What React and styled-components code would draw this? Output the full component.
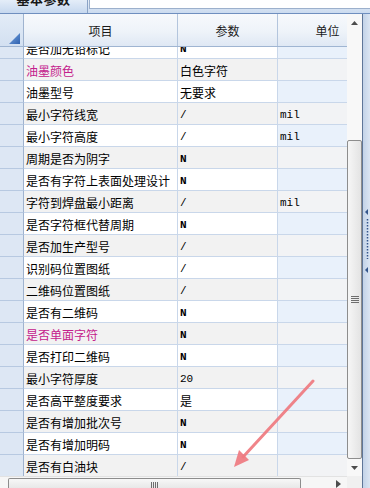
import React from "react";
import styled, { createGlobalStyle } from "styled-components";

const Global = createGlobalStyle`
  html, body { margin: 0; padding: 0; overflow: hidden; background: #ffffff; }
  body { width: 370px; height: 488px; font-family: "Noto Sans CJK SC", "Noto Sans", sans-serif; }
`;

const Frame = styled.div`
  position: relative;
  width: 370px;
  height: 488px;
  display: flex;
  flex-direction: column;
  overflow: hidden;
`;

const TabStrip = styled.div`
  height: 13px;
  flex: none;
  display: flex;
  align-items: flex-start;
  background: linear-gradient(#e6eef8, #cbdbef);
  border-bottom: 1px solid #6f8fbf;
`;

const Tab = styled.div`
  width: 87px;
  height: 13px;
  flex: none;
  overflow: hidden;
  border-right: 1px solid #8aa3c6;
  background: linear-gradient(#e4edf8, #c6d8ef);
  display: flex;
  justify-content: center;
`;

const TabLabel = styled.span`
  margin-top: -10px;
  font-size: 13px;
  line-height: 17px;
  font-weight: 700;
  color: #1a1a1a;
  letter-spacing: 0.5px;
`;

const TabFiller = styled.div`
  flex: 1;
  height: 8px;
  margin-left: 1px;
  background: #ffffff;
  border-left: 1px solid #9cb0cc;
  border-bottom: 1px solid #9cb0cc;
`;

const Main = styled.div`
  flex: 1;
  display: flex;
  min-height: 0;
`;

const GridArea = styled.div`
  width: 362px;
  flex: none;
  display: flex;
  flex-direction: column;
`;

const Body = styled.div`
  flex: 1;
  display: flex;
  min-height: 0;
`;

const Viewport = styled.div`
  width: 347px;
  flex: none;
  overflow: hidden;
  display: flex;
  flex-direction: column;
`;

const HeaderRow = styled.div`
  height: 33px;
  flex: none;
  display: flex;
  border-bottom: 1px solid #9fb5d2;
  box-sizing: border-box;
`;

const Corner = styled.div`
  position: relative;
  width: 24px;
  flex: none;
  box-sizing: border-box;
  border-right: 1px solid #9fb3cf;
  background: linear-gradient(#e3ecf7, #d3e0f1);
`;

const CornerMark = styled.svg`
  position: absolute;
  right: 2px;
  bottom: 1px;
`;

const HeadCell = styled.div`
  width: ${(p) => p.$w}px;
  flex: none;
  box-sizing: border-box;
  border-right: 1px solid #b3c5dd;
  background: linear-gradient(#f7f9fc 0%, #eef3f9 55%, #dfe8f4 100%);
  display: flex;
  align-items: center;
  justify-content: center;
  font-size: 12px;
  color: #1a1a1a;
`;

const RowsViewport = styled.div`
  flex: 1;
  overflow: hidden;
  min-height: 0;
`;

const Rows = styled.div`
  margin-top: -10px;
  display: flex;
  flex-direction: column;
`;

const Row = styled.div`
  height: 22px;
  flex: none;
  display: flex;
`;

const Indicator = styled.div`
  width: 24px;
  flex: none;
  box-sizing: border-box;
  border-right: 1px solid #9fb3cf;
  border-bottom: 1px solid #b7c9e1;
  background: #dde7f4;
`;

const Cell = styled.div`
  width: ${(p) => p.$w}px;
  flex: none;
  box-sizing: border-box;
  border-right: 1px solid #c9d7ea;
  border-bottom: 1px solid #c9d7ea;
  background: ${(p) => (p.$unit ? (p.$odd ? "#f2f3f5" : "#e9f1fb") : p.$odd ? "#f2f2f2" : "#ffffff")};
  display: flex;
  align-items: center;
  padding: 2px 0 0 2px;
  font-size: 12px;
  color: ${(p) => (p.$hl ? "#c4208c" : "#000000")};
  white-space: nowrap;
  overflow: hidden;
`;

const Mono = styled.span`
  font-family: "Liberation Mono", "DejaVu Sans Mono", monospace;
  font-size: 11px;
  font-weight: ${(p) => (p.$bold ? 700 : 400)};
`;

const VScroll = styled.div`
  width: 15px;
  flex: none;
  display: flex;
  flex-direction: column;
  background: #f8f8f8;
`;

const ArrowBtn = styled.div`
  height: 17px;
  flex: none;
  display: flex;
  align-items: center;
  justify-content: center;
`;

const TrackGap = styled.div`
  height: ${(p) => p.$h}px;
  flex: none;
`;

const VThumb = styled.div`
  flex: 1;
  box-sizing: border-box;
  border: 1px solid #8d8d8d;
  border-radius: 2px;
  background: linear-gradient(to right, #f6f6f6, #e3e3e3);
  display: flex;
  align-items: center;
  justify-content: center;
`;

const Grip = styled.div`
  display: flex;
  flex-direction: ${(p) => (p.$vertical ? "row" : "column")};
  gap: 1px;
`;

const GripLine = styled.div`
  width: ${(p) => (p.$vertical ? "1px" : "8px")};
  height: ${(p) => (p.$vertical ? "7px" : "1px")};
  background: #6e6e6e;
`;

const HRow = styled.div`
  height: 12px;
  flex: none;
  display: flex;
`;

const HScroll = styled.div`
  width: 347px;
  flex: none;
  display: flex;
  align-items: flex-start;
  background: #f6f6f6;
  border-top: 1px solid #e2e2e2;
  box-sizing: border-box;
`;

const HLeft = styled.div`
  width: 8px;
  flex: none;
  height: 11px;
  overflow: hidden;
`;

const HThumb = styled.div`
  width: 293px;
  height: 11px;
  margin-top: 1px;
  flex: none;
  box-sizing: border-box;
  border: 1px solid #8d8d8d;
  border-bottom: none;
  border-radius: 2px 2px 0 0;
  background: linear-gradient(#f7f7f7, #e6e6e6);
  display: flex;
  justify-content: center;
  padding-top: 3px;
`;

const HRight = styled.div`
  flex: 1;
  display: flex;
  justify-content: flex-end;
  padding: 3px 6px 0 0;
`;

const ScrollCorner = styled.div`
  width: 15px;
  flex: none;
  background: #f0f0f0;
`;

const Splitter = styled.div`
  width: 8px;
  flex: none;
  box-sizing: border-box;
  border-left: 1px solid #5f7698;
  background: linear-gradient(to right, #c3d3e8, #dbe5f2);
  display: flex;
  flex-direction: column;
  align-items: center;
  padding-top: 195px;
`;

const Overlay = styled.svg`
  position: absolute;
  left: 0;
  top: 0;
  pointer-events: none;
`;

const rows = [
  ["是否加无铅标记", "N", ""],
  ["油墨颜色", "白色字符", "", true],
  ["油墨型号", "无要求", ""],
  ["最小字符线宽", "/", "mil"],
  ["最小字符高度", "/", "mil"],
  ["周期是否为阴字", "N", ""],
  ["是否有字符上表面处理设计", "N", ""],
  ["字符到焊盘最小距离", "/", "mil"],
  ["是否字符框代替周期", "N", ""],
  ["是否加生产型号", "/", ""],
  ["识别码位置图纸", "/", ""],
  ["二维码位置图纸", "/", ""],
  ["是否有二维码", "N", ""],
  ["是否单面字符", "N", "", true],
  ["是否打印二维码", "N", ""],
  ["最小字符厚度", "20", ""],
  ["是否高平整度要求", "是", ""],
  ["是否有增加批次号", "N", ""],
  ["是否有增加明码", "N", ""],
  ["是否有白油块", "/", ""],
];

const isAscii = (s) => /^[\x00-\x7f]+$/.test(s);

const Value = ({ text }) =>
  isAscii(text) ? <Mono $bold={text === "N"}>{text}</Mono> : <span>{text}</span>;

export default function App() {
  return (
    <Frame>
      <Global />
      <TabStrip>
        <Tab>
          <TabLabel>基本参数</TabLabel>
        </Tab>
        <TabFiller />
      </TabStrip>
      <Main>
        <GridArea>
          <Body>
            <Viewport>
              <HeaderRow>
                <Corner>
                  <CornerMark width="12" height="12" viewBox="0 0 12 12">
                    <defs>
                      <linearGradient id="cm" x1="0" y1="0" x2="1" y2="1">
                        <stop offset="0" stopColor="#7aa6e0" />
                        <stop offset="1" stopColor="#2f62b0" />
                      </linearGradient>
                    </defs>
                    <polygon points="11,0 11,11 0,11" fill="url(#cm)" />
                  </CornerMark>
                </Corner>
                <HeadCell $w={154}>项目</HeadCell>
                <HeadCell $w={100}>参数</HeadCell>
                <HeadCell $w={100}>单位</HeadCell>
              </HeaderRow>
              <RowsViewport>
                <Rows>
                  {rows.map(([name, val, unit, hl], i) => (
                    <Row key={i}>
                      <Indicator />
                      <Cell $w={154} $odd={i % 2 === 1} $hl={hl}>
                        {name}
                      </Cell>
                      <Cell $w={100} $odd={i % 2 === 1}>
                        <Value text={val} />
                      </Cell>
                      <Cell $w={100} $odd={i % 2 === 1} $unit>
                        {unit && <Mono>{unit}</Mono>}
                      </Cell>
                    </Row>
                  ))}
                </Rows>
              </RowsViewport>
            </Viewport>
            <VScroll>
              <ArrowBtn>
                <svg width="7" height="4" viewBox="0 0 7 4">
                  <polygon points="0,4 7,4 3.5,0" fill="#4d4d4d" />
                </svg>
              </ArrowBtn>
              <TrackGap $h={109} />
              <VThumb>
                <Grip>
                  <GripLine />
                  <GripLine />
                  <GripLine />
                  <GripLine />
                </Grip>
              </VThumb>
              <ArrowBtn>
                <svg width="7" height="4" viewBox="0 0 7 4">
                  <polygon points="0,0 7,0 3.5,4" fill="#4d4d4d" />
                </svg>
              </ArrowBtn>
            </VScroll>
          </Body>
          <HRow>
            <HScroll>
              <HLeft>
                <svg width="8" height="11" viewBox="0 0 8 11">
                  <polygon points="2,3 2,10 -2,6.5" fill="#4d4d4d" />
                </svg>
              </HLeft>
              <HThumb>
                <Grip $vertical>
                  <GripLine $vertical />
                  <GripLine $vertical />
                  <GripLine $vertical />
                  <GripLine $vertical />
                </Grip>
              </HThumb>
              <HRight>
                <svg width="5" height="8" viewBox="0 0 5 8">
                  <polygon points="0,0 0,8 5,4" fill="#4d4d4d" />
                </svg>
              </HRight>
            </HScroll>
            <ScrollCorner />
          </HRow>
        </GridArea>
        <Splitter>
          <svg width="4" height="80" viewBox="0 0 4 80">
            <polygon points="3,0 3,6 0,3" fill="#34568c" />
            <line x1="2.5" y1="10" x2="2.5" y2="50" stroke="#34568c" strokeWidth="1.5" strokeDasharray="1.5 1.5" />
            <polygon points="3,58 3,64 0,61" fill="#34568c" />
          </svg>
        </Splitter>
      </Main>
      <Overlay width="370" height="488" viewBox="0 0 370 488">
        <line x1="313" y1="381" x2="243" y2="457" stroke="#ef7a80" strokeWidth="3" strokeLinecap="round" opacity="0.92" />
        <polygon points="234,467 249,460 239,450" fill="#ef7a80" opacity="0.92" />
      </Overlay>
    </Frame>
  );
}
